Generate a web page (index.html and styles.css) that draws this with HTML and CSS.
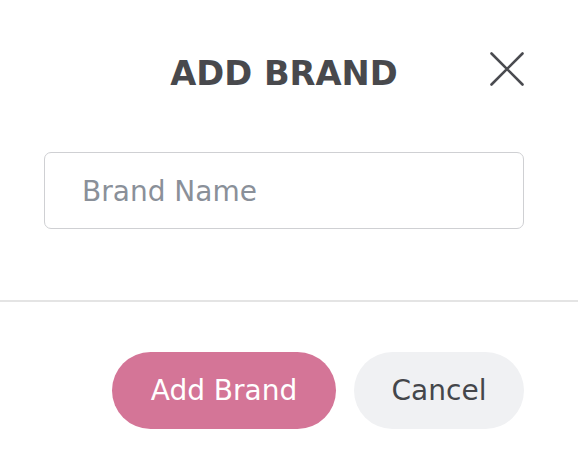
FILE: index.html
```html
<!DOCTYPE html>
<html>
<head>
<meta charset="utf-8">
<link rel="stylesheet" href="styles.css">
</head>
<body>
<div class="modal">
  <div class="header">
    <span class="spacer"></span>
    <h1 class="title">ADD BRAND</h1>
    <button class="close" aria-label="Close">
      <svg width="34" height="34" viewBox="0 0 34 34"><path d="M1.5 1.5 L32.5 32.5 M32.5 1.5 L1.5 32.5" stroke="#4a4b50" stroke-width="2.6" stroke-linecap="round" fill="none"/></svg>
    </button>
  </div>
  <div class="body">
    <input class="field" type="text" placeholder="Brand Name">
  </div>
  <div class="divider"></div>
  <div class="footer">
    <button class="btn btn-primary">Add Brand</button>
    <button class="btn btn-secondary">Cancel</button>
  </div>
</div>
</body>
</html>
```
FILE: styles.css
```css
html, body {
  margin: 0;
  padding: 0;
  background: #ffffff;
}
body {
  font-family: "DejaVu Sans", "Liberation Sans", sans-serif;
}
.modal {
  width: 578px;
  height: 466px;
  background: #fff;
}
.header {
  display: grid;
  grid-template-columns: 1fr auto 1fr;
  align-items: center;
  height: 44px;
  padding: 52px 54px 0 44px;
}
.title {
  margin: 0;
  font-size: 33.7px;
  line-height: 44px;
  font-weight: bold;
  color: #48494d;
  letter-spacing: 0;
}
.close {
  justify-self: end;
  align-self: start;
  width: 34px;
  height: 34px;
  padding: 0;
  border: 0;
  background: transparent;
  display: flex;
}
.body {
  padding: 56px 54px 0 44px;
}
.field {
  box-sizing: border-box;
  display: block;
  width: 480px;
  height: 77px;
  border: 1.5px solid #cfd0d3;
  border-radius: 7px;
  padding: 2px 0 0 37px;
  font-family: "DejaVu Sans", "Liberation Sans", sans-serif;
  font-size: 28px;
  color: #44464a;
  outline: none;
}
.field::placeholder {
  color: #8a9099;
}
.divider {
  margin-top: 71px;
  height: 2px;
  background: #e4e4e4;
}
.footer {
  display: flex;
  justify-content: flex-end;
  gap: 18px;
  padding: 50px 54px 0 0;
}
.btn {
  height: 77px;
  border: 0;
  border-radius: 39px;
  font-family: "DejaVu Sans", "Liberation Sans", sans-serif;
  font-size: 28px;
  padding: 0;
}
.btn-primary {
  width: 224px;
  background: #d47597;
  color: #ffffff;
}
.btn-secondary {
  width: 170px;
  background: #f0f1f3;
  color: #44464a;
}
```
